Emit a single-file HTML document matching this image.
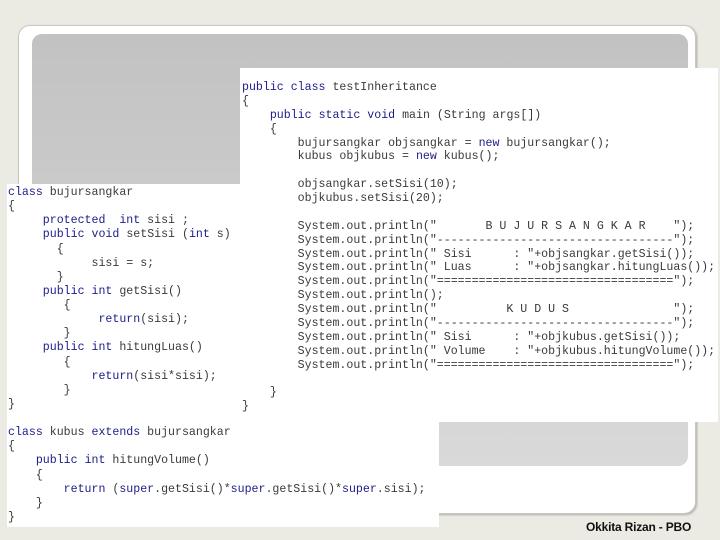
<!DOCTYPE html>
<html><head><style>
body{margin:0;width:720px;height:540px;background:#ecebe3;position:relative;overflow:hidden;font-family:"Liberation Mono",monospace}
.frame{position:absolute;left:18px;top:25px;width:676px;height:487px;background:#fff;border:1px solid #c8c8c0;border-radius:12px;box-shadow:1px 1px 2px #aaa}
.grey{position:absolute;left:32px;top:34px;width:656px;height:432px;background:linear-gradient(#c2c2c2,#d9d9d9);border-radius:10px}
.box{position:absolute;background:#fff;margin:0}
pre{margin:0;font-family:"Liberation Mono",monospace;font-size:11.6px;line-height:13.95px;color:#3a3a3a;white-space:pre}
b{font-weight:normal;color:#1c1c8a}
.foot{position:absolute;left:586px;top:520px;font:bold 12px "Liberation Sans",sans-serif;color:#111;letter-spacing:-0.2px}
</style></head><body>
<div class="frame"></div>
<div class="grey"></div>
<div class="box" style="left:7px;top:184px;width:432px;height:343px"><pre style="padding:2px 0 0 1px;line-height:14.13px">
<b>class</b> bujursangkar
{
     <b>protected</b>  <b>int</b> sisi ;
     <b>public</b> <b>void</b> setSisi (<b>int</b> s)
       {
            sisi = s;
       }
     <b>public</b> <b>int</b> getSisi()
        {
             <b>return</b>(sisi);
        }
     <b>public</b> <b>int</b> hitungLuas()
        {
            <b>return</b>(sisi*sisi);
        }
}

<b>class</b> kubus <b>extends</b> bujursangkar
{
    <b>public</b> <b>int</b> hitungVolume()
    {
        <b>return</b> (<b>super</b>.getSisi()*<b>super</b>.getSisi()*<b>super</b>.sisi);
    }
}</pre></div>
<div class="box" style="left:240px;top:68px;width:478px;height:354px"><pre style="padding:13px 0 0 2px;line-height:13.87px">
<b>public</b> <b>class</b> testInheritance
{
    <b>public</b> <b>static</b> <b>void</b> main (String args[])
    {
        bujursangkar objsangkar = <b>new</b> bujursangkar();
        kubus objkubus = <b>new</b> kubus();

        objsangkar.setSisi(10);
        objkubus.setSisi(20);

        System.out.println("       B U J U R S A N G K A R    ");
        System.out.println("----------------------------------");
        System.out.println(" Sisi      : "+objsangkar.getSisi());
        System.out.println(" Luas      : "+objsangkar.hitungLuas());
        System.out.println("==================================");
        System.out.println();
        System.out.println("          K U D U S               ");
        System.out.println("----------------------------------");
        System.out.println(" Sisi      : "+objkubus.getSisi());
        System.out.println(" Volume    : "+objkubus.hitungVolume());
        System.out.println("==================================");

    }
}</pre></div>
<div class="foot">Okkita Rizan - PBO</div>
</body></html>
